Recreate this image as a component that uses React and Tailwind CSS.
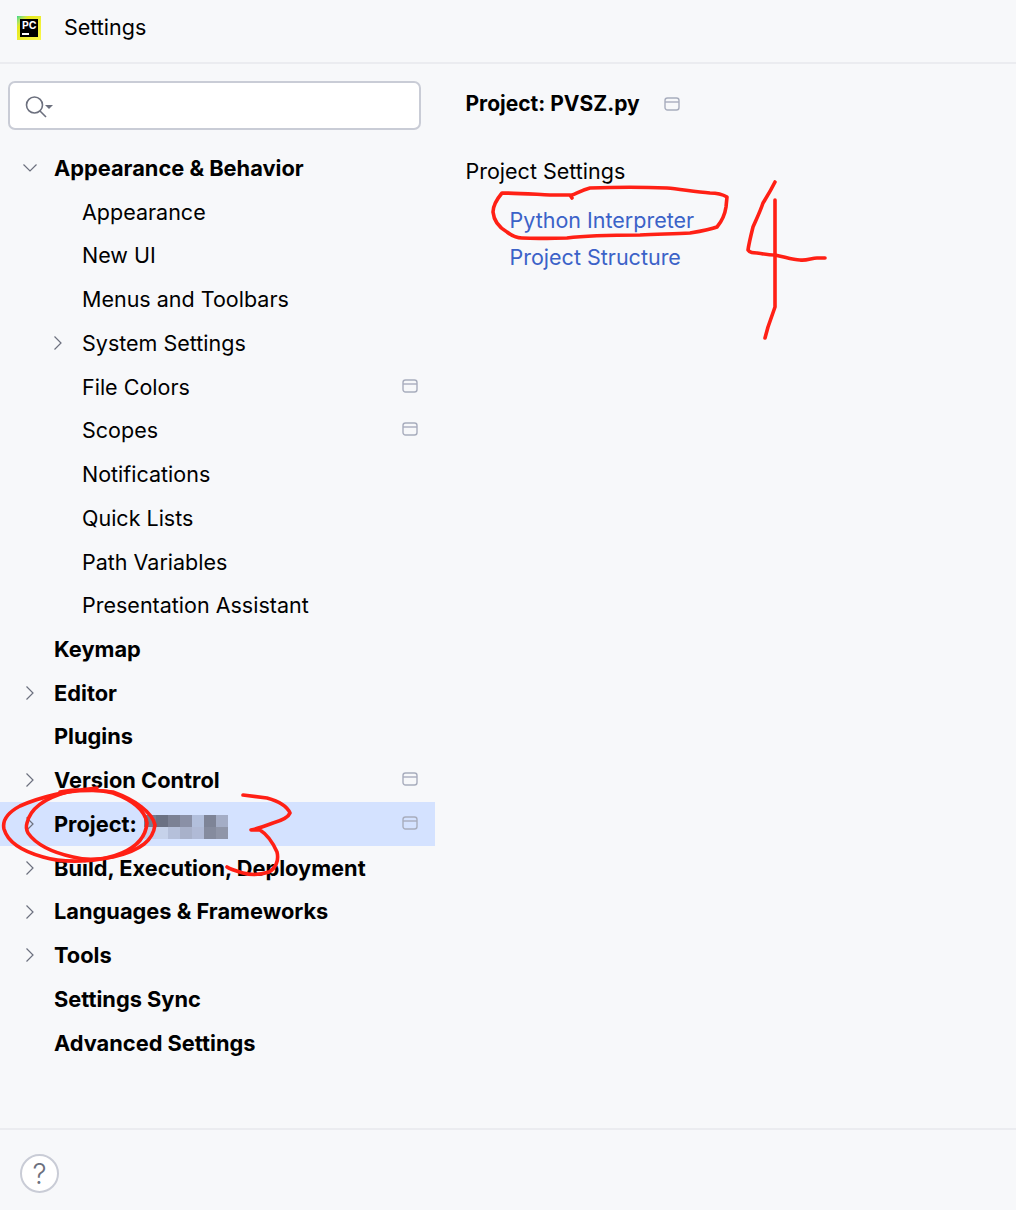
import React from "react";

const Chevron = ({ open }) => (
  <svg viewBox="0 0 16 16" className="h-[16px] w-[16px] text-[#6c707e]" fill="none" stroke="currentColor" strokeWidth="1.2">
    {open ? <path d="M1.5 4.5 8 11l6.5-6.5" /> : <path d="M4.5 1.5 11 8l-6.5 6.5" />}
  </svg>
);

const PinIcon = () => (
  <svg viewBox="0 0 16 16" className="h-[16px] w-[16px] text-[#a8adbd]" fill="none" stroke="currentColor" strokeWidth="1.4">
    <rect x="1" y="2" width="14" height="12" rx="2.5" />
    <path d="M1 6h14" />
  </svg>
);

const tree = [
  { label: "Appearance & Behavior", bold: true, chevron: "open" },
  { label: "Appearance" },
  { label: "New UI" },
  { label: "Menus and Toolbars" },
  { label: "System Settings", chevron: "closed" },
  { label: "File Colors", pin: true },
  { label: "Scopes", pin: true },
  { label: "Notifications" },
  { label: "Quick Lists" },
  { label: "Path Variables" },
  { label: "Presentation Assistant" },
  { label: "Keymap", bold: true },
  { label: "Editor", bold: true, chevron: "closed" },
  { label: "Plugins", bold: true },
  { label: "Version Control", bold: true, chevron: "closed", pin: true },
  { label: "Project:", bold: true, chevron: "closed", pin: true, selected: true },
  { label: "Build, Execution, Deployment", bold: true, chevron: "closed" },
  { label: "Languages & Frameworks", bold: true, chevron: "closed" },
  { label: "Tools", bold: true, chevron: "closed" },
  { label: "Settings Sync", bold: true },
  { label: "Advanced Settings", bold: true },
];

const blurCells = [
  "bg-[#767c8f]", "bg-[#6b7183]", "bg-[#7b8194]", "bg-[#8a90a6]", "bg-[#b2bfdc]", "bg-[#7e8497]", "bg-[#a4adc6]",
  "bg-[#c3d0ec]", "bg-[#c6d2ea]", "bg-[#b5c0da]", "bg-[#a8b1ca]", "bg-[#b0bad6]", "bg-[#858b9e]", "bg-[#8f95a8]",
];

const TreeRow = ({ item }) => (
  <div className={`flex h-[43.75px] items-center pr-[17px] ${item.selected ? "bg-[#d4e2ff]" : ""}`}>
    <div className={`flex shrink-0 justify-end ${item.bold ? "w-[38px]" : "w-[66px]"}`}>
      {item.chevron && <Chevron open={item.chevron === "open"} />}
    </div>
    <span className={`ml-[16px] whitespace-nowrap ${item.bold ? "text-[21.8px] font-bold" : ""}`}>{item.label}</span>
    {item.selected && (
      <div className="ml-[7px] mt-[5px] grid grid-cols-7">
        {blurCells.map((cell, index) => (
          <div className={`h-[12px] w-[12px] ${cell}`} key={index} />
        ))}
      </div>
    )}
    {item.pin && (
      <div className="ml-auto -translate-y-[1px]">
        <PinIcon />
      </div>
    )}
  </div>
);

const Scribbles = () => (
  <svg
    className="pointer-events-none absolute left-0 top-0 h-[1210px] w-[1016px]"
    viewBox="0 0 1016 1210"
    fill="none"
    stroke="#ff2015"
    strokeWidth="3.6"
    strokeLinecap="round"
    strokeLinejoin="round"
  >
    <path d="M97 788C70 790 40 797 20 806C7 813 2 820 4 829C8 843 25 852 43 857C62 863 100 863 122 853C138 846 146 835 147 823C145 811 135 801 113 793C97 789 75 789 60 792" />
    <path d="M27 823C30 810 42 799 67 792C85 790 100 790 113 792C135 800 152 812 155 825C153 840 142 850 113 857C95 860 85 860 73 857C50 852 35 843 28 833C26 829 26 826 27 823" />
    <path d="M243 795L267 798C278 801 287 806 290 813C288 818 280 821 273 823C265 826 256 829 251 830H260C268 835 273 843 277 852C279 860 276 868 269 872C260 875 250 875 243 873C236 871 230 869 227 867" />
    <path d="M572 198L570 195L550 195C530 194 515 193 502 193C497 199 493 205 493 212C494 222 500 228 507 232C512 236 516 238 522 238C540 239 555 238 567 238C590 235 610 235 640 235C660 234 675 234 690 233C702 231 712 229 717 227C722 221 725 214 726 207L727 197C722 194 716 193 710 193C695 192 680 189 667 188C645 187 615 187 590 188C582 190 577 193 572 195" />
    <path d="M775 182C770 192 766 198 763 203C760 212 756 220 753 227C751 235 749 243 748 250C750 253 753 253 757 253C763 254 769 255 775 255C785 257 793 260 800 260C806 261 812 258 817 258H825" />
    <path d="M775 200V307L768 327L765 338" />
  </svg>
);

export default function App() {
  return (
    <div className="relative flex h-[1210px] w-[1016px] flex-col overflow-hidden bg-[#f7f8fa] font-['Inter',sans-serif] text-[21.5px] text-black">
      <header className="flex h-[64px] shrink-0 items-center border-b-2 border-[#ebecf0] pb-[7px] pl-[17px]">
        <div className="flex h-[24px] w-[24px] items-center justify-center bg-gradient-to-br from-[#21d789] via-[#e4e81c] via-[25%] to-[#fcf84a]">
          <div className="flex h-[18px] w-[18px] flex-col bg-black pl-[2px] pt-[1px]">
            <span className="text-[10.5px] font-bold leading-[11px] text-white">PC</span>
            <div className="mt-[2px] h-[2px] w-[7px] bg-white" />
          </div>
        </div>
        <span className="ml-[23px]">Settings</span>
      </header>

      <main className="flex min-h-0 flex-1">
        <aside className="w-[435px] shrink-0">
          <div className="ml-[8px] mt-[17px] flex h-[49px] w-[413px] items-center rounded-[7px] border-2 border-[#c9ccd6] bg-white pl-[15px]">
            <svg viewBox="0 0 30 24" className="h-[24px] w-[30px] text-[#6c707e]" fill="none" stroke="currentColor" strokeWidth="1.6">
              <circle cx="9.5" cy="11" r="8" />
              <path d="M15 17 21 23" />
              <path d="M20 11h8l-4 4z" fill="currentColor" stroke="none" />
            </svg>
          </div>
          <nav className="mt-[16px]">
            {tree.map((item) => (
              <TreeRow item={item} key={item.label} />
            ))}
          </nav>
        </aside>

        <section className="flex-1 pl-[30.5px] pt-[20px]">
          <div className="flex h-[40px] items-center">
            <h1 className="text-[21px] font-bold">Project: PVSZ.py</h1>
            <div className="ml-[24px]">
              <PinIcon />
            </div>
          </div>
          <p className="mt-[27px] leading-[40px]">Project Settings</p>
          <div className="ml-[44px] mt-[13px] flex flex-col gap-[5px] text-[#3b62c8]">
            <a className="leading-[32px]">Python Interpreter</a>
            <a className="leading-[32px]">Project Structure</a>
          </div>
        </section>
      </main>

      <footer className="flex h-[82px] shrink-0 items-start border-t-2 border-[#ebecf0] pl-[20px] pt-[24px]">
        <div className="flex h-[39px] w-[39px] items-center justify-center rounded-full border-2 border-[#c9ccd6] bg-white text-[28px] font-light text-[#6c707e]">
          ?
        </div>
      </footer>

      <Scribbles />
    </div>
  );
}
